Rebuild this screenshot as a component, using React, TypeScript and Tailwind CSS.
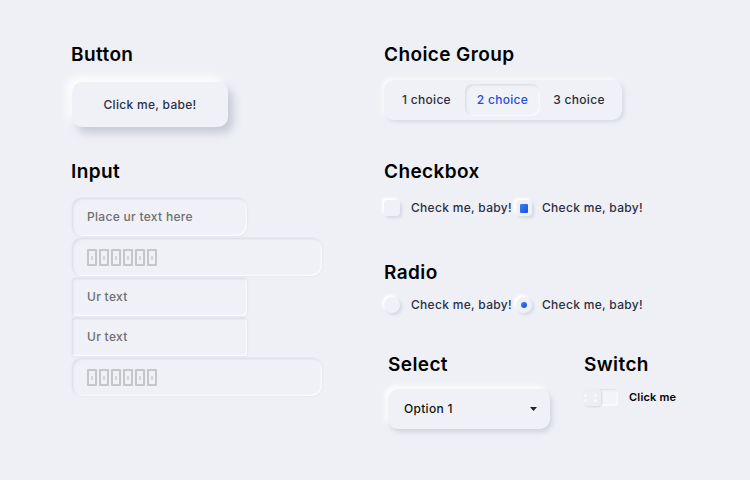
import React from "react";

const font = { fontFamily: "Inter, 'Open Sans', sans-serif" };

function Tofu() {
  return (
    <div className="flex gap-[2px]">
      {[0, 1, 2, 3, 4, 5].map((i) => (
        <span key={i} className="relative block w-[10px] h-[17px] border-2 border-[#c6c6c9] rounded-[1px]">
          <span className="absolute left-[2px] top-[5px] w-[2px] h-[4px] bg-[#d4d4d7]" />
        </span>
      ))}
    </div>
  );
}

const inputShadow =
  "shadow-[inset_1px_1px_2px_rgba(160,165,185,0.25),inset_-1px_-1px_2px_rgba(255,255,255,0.9),0_0_2px_rgba(200,205,220,0.6)]";

const h2 = "text-[19px] leading-[24px] font-semibold text-black tracking-[0.4px]";
const body = "text-[12px] font-medium tracking-[0.3px]";

export default function App() {
  return (
    <div style={font} className="w-[750px] h-[480px] bg-[#eef0f5] flex text-[#2b2f45] overflow-hidden">
      {/* Left column */}
      <div className="w-[384px] shrink-0 pl-[71px] pt-[43px] flex flex-col">
        <h2 className={h2}>Button</h2>
        <button className={`mt-[15px] ml-[1px] w-[156px] h-[45px] rounded-[10px] bg-[#f0f1f6] text-[#2b2f45] shadow-[5px_6px_9px_rgba(150,155,175,0.45),-5px_-5px_9px_rgba(255,255,255,1)] ${body}`}>
          Click me, babe!
        </button>
        <h2 className={`mt-[33px] ${h2}`}>Input</h2>
        <div className="mt-[14px] ml-[1px] flex flex-col gap-[2px]">
          <div className={`w-[175px] h-[38px] rounded-[10px] bg-[#eff1f6] flex items-center pl-[15px] text-[#6e6e73] ${body} ${inputShadow}`}>
            Place ur text here
          </div>
          <div className={`w-[250px] h-[38px] rounded-[10px] bg-[#eff1f6] flex items-center pl-[15px] ${inputShadow}`}>
            <Tofu />
          </div>
          <div className={`w-[175px] h-[38px] rounded-[4px] bg-[#eff1f6] flex items-center pl-[15px] text-[#6e6e73] ${body} ${inputShadow}`}>
            Ur text
          </div>
          <div className={`w-[175px] h-[38px] rounded-[2px] bg-[#eff1f6] flex items-center pl-[15px] text-[#6e6e73] ${body} ${inputShadow}`}>
            Ur text
          </div>
          <div className={`w-[250px] h-[38px] rounded-[10px] bg-[#eff1f6] flex items-center pl-[15px] ${inputShadow}`}>
            <Tofu />
          </div>
        </div>
      </div>

      {/* Right column */}
      <div className="flex-1 pt-[43px] flex flex-col">
        <h2 className={h2}>Choice Group</h2>
        <div className={`mt-[13px] w-[238px] h-[40px] rounded-[10px] bg-[#eff1f6] flex items-center px-[4px] shadow-[2px_2px_4px_rgba(170,175,195,0.35),-2px_-2px_4px_rgba(255,255,255,0.9)] ${body}`}>
          <div className="w-[77px] text-center text-[#2b2d3a]">1 choice</div>
          <div className="w-[75px] h-[32px] rounded-[8px] bg-[#f1f2f7] flex items-center justify-center text-[#1f4fe0] shadow-[inset_1px_1px_3px_rgba(160,165,185,0.35),inset_-1px_-1px_2px_rgba(255,255,255,1)]">
            2 choice
          </div>
          <div className="flex-1 text-center text-[#2b2d3a]">3 choice</div>
        </div>

        <h2 className={`mt-[40px] ${h2}`}>Checkbox</h2>
        <div className={`mt-[16px] flex items-center h-[16px] ${body}`}>
          <span className="w-[16px] h-[16px] rounded-[4px] bg-[#eff1f6] shadow-[2px_2px_3px_rgba(170,175,195,0.35),-2px_-2px_3px_rgba(255,255,255,1)]" />
          <span className="ml-[11px] w-[105px]">Check me, baby!</span>
          <span className="w-[16px] h-[16px] rounded-[4px] bg-[#eff1f6] flex items-center justify-center shadow-[2px_2px_3px_rgba(170,175,195,0.35),-2px_-2px_3px_rgba(255,255,255,1)]">
            <span className="w-[8px] h-[9px] rounded-[1px] bg-gradient-to-br from-[#3b82f6] to-[#1d4ed8]" />
          </span>
          <span className="ml-[10px]">Check me, baby!</span>
        </div>

        <h2 className={`mt-[45px] ${h2}`}>Radio</h2>
        <div className={`mt-[12px] flex items-center h-[16px] ${body}`}>
          <span className="w-[16px] h-[16px] rounded-full bg-[#eff1f6] shadow-[2px_2px_3px_rgba(170,175,195,0.35),-2px_-2px_3px_rgba(255,255,255,1)]" />
          <span className="ml-[11px] w-[105px]">Check me, baby!</span>
          <span className="w-[16px] h-[16px] rounded-full bg-[#eff1f6] flex items-center justify-center shadow-[2px_2px_3px_rgba(170,175,195,0.35),-2px_-2px_3px_rgba(255,255,255,1)]">
            <span className="w-[6px] h-[6px] rounded-full bg-gradient-to-br from-[#3b82f6] to-[#1d4ed8]" />
          </span>
          <span className="ml-[10px]">Check me, baby!</span>
        </div>

        <div className="mt-[40px] flex">
          <div className="w-[200px] pl-[4px] flex flex-col">
            <h2 className={h2}>Select</h2>
            <div className={`mt-[12px] w-[162px] h-[40px] rounded-[10px] bg-[#f0f1f6] flex items-center justify-between pl-[16px] pr-[13px] text-[#111] shadow-[2px_3px_5px_rgba(160,165,185,0.4),-3px_-3px_5px_rgba(255,255,255,1)] ${body}`}>
              <span>Option 1</span>
              <svg width="7" height="4" viewBox="0 0 7 4">
                <path d="M0 0 L7 0 L3.5 4 Z" fill="#222" />
              </svg>
            </div>
          </div>
          <div className="flex flex-col">
            <h2 className={h2}>Switch</h2>
            <div className="mt-[12px] flex items-center">
              <div className="w-[34px] h-[17px] rounded-[4px] bg-[#f3f4f8] shadow-[inset_1px_1px_2px_rgba(170,175,195,0.3),inset_-1px_-1px_2px_rgba(255,255,255,1)] flex">
                <div className="w-[17px] h-[17px] rounded-[4px] bg-[#eceef3] shadow-[1px_1px_2px_rgba(170,175,195,0.4)] grid grid-cols-2 gap-[2px] place-content-center">
                  <span className="w-[3px] h-[3px] rounded-full bg-[#f8f9fb]" />
                  <span className="w-[3px] h-[3px] rounded-full bg-[#f8f9fb]" />
                  <span className="w-[3px] h-[3px] rounded-full bg-[#f8f9fb]" />
                  <span className="w-[3px] h-[3px] rounded-full bg-[#f8f9fb]" />
                </div>
              </div>
              <span className="ml-[11px] text-[11px] font-semibold text-black tracking-[0.2px]">Click me</span>
            </div>
          </div>
        </div>
      </div>
    </div>
  );
}
